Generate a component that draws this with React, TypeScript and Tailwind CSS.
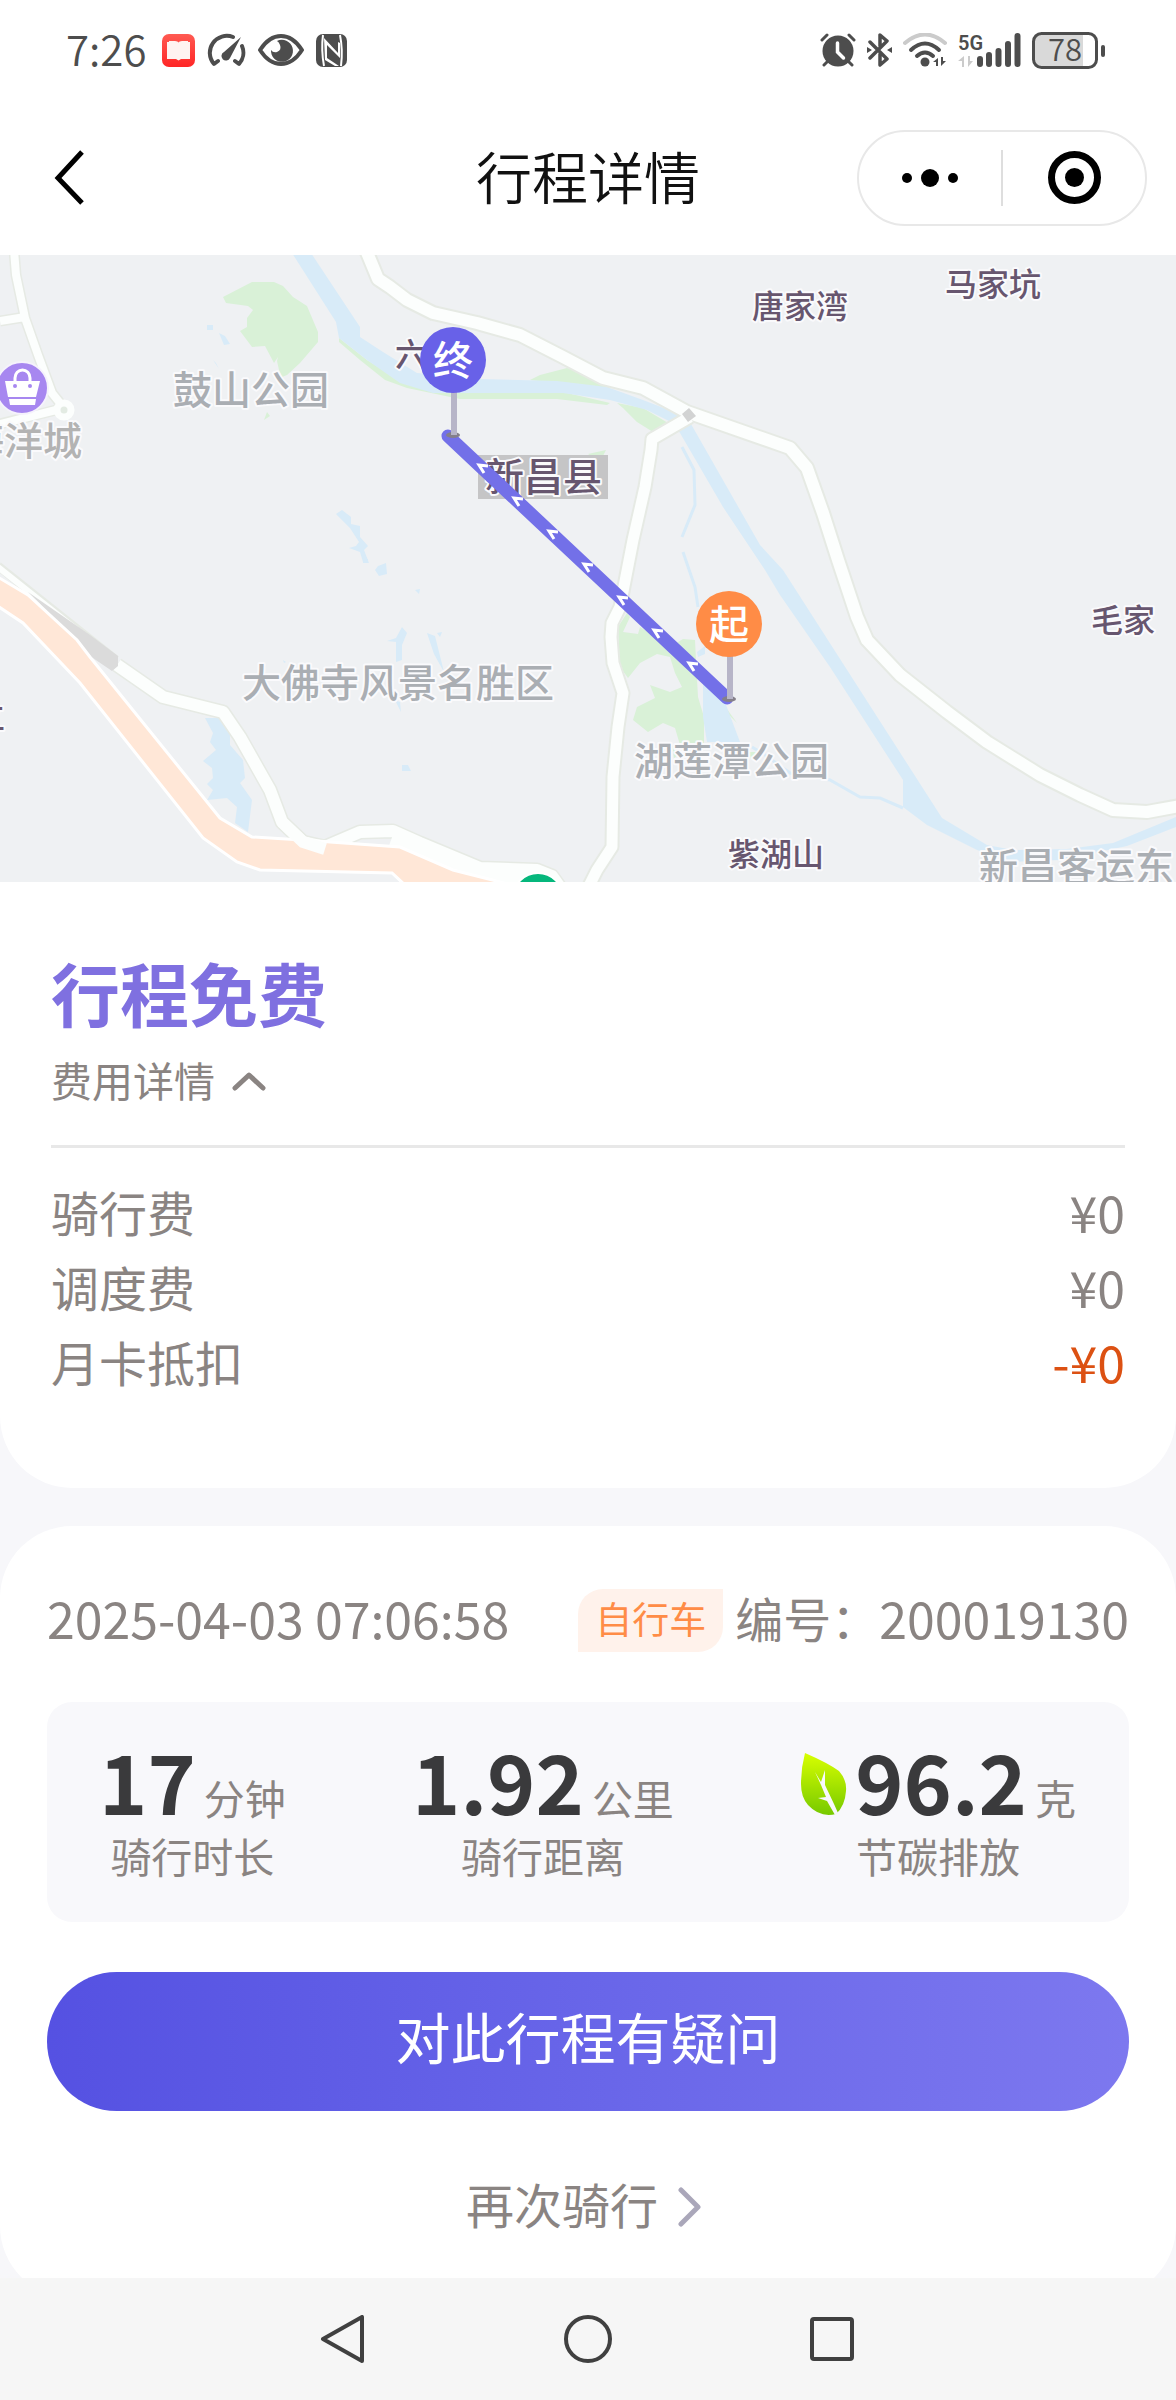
import * as React from "react"

const fees = [
  { label: "骑行费", value: "¥0" },
  { label: "调度费", value: "¥0" },
  { label: "月卡抵扣", value: "-¥0", discount: true },
]

const stats = [
  { value: "17", unit: "分钟", label: "骑行时长" },
  { value: "1.92", unit: "公里", label: "骑行距离" },
  { value: "96.2", unit: "克", label: "节碳排放", leaf: true },
]

const places = [
  { name: "海洋城", x: -35, y: 455, size: 39, color: "#b3b3b3" },
  { name: "鼓山公园", x: 173, y: 404, size: 39, color: "#aaaeb3" },
  { name: "大佛寺风景名胜区", x: 242, y: 697, size: 39, color: "#aaaeb3" },
  { name: "湖莲潭公园", x: 634, y: 775, size: 39, color: "#aaaeb3" },
  { name: "新昌客运东", x: 979, y: 881, size: 39, color: "#aaaeb3" },
  { name: "唐家湾", x: 752, y: 318, size: 32, color: "#67566f" },
  { name: "马家坑", x: 945, y: 296, size: 32, color: "#67566f" },
  { name: "毛家", x: 1091, y: 632, size: 32, color: "#67566f" },
  { name: "紫湖山", x: 728, y: 866, size: 32, color: "#67566f" },
  { name: "六", x: 395, y: 366, size: 32, color: "#67566f" },
  { name: "立", x: -27, y: 728, size: 32, color: "#67566f" },
  { name: "新昌县", x: 485, y: 491, size: 39, color: "#67566f" },
]

const arrows = [
  [479, 465],
  [514, 498],
  [549, 531],
  [584, 564],
  [619, 597],
  [654, 630],
  [689, 663],
]

const northRoad =
  "M366 250L378 279L390 287L407 300L433 313L477 323L520 335L563 357L603 378L643 388L687 412L790 448L807 468L823 513L838 560L857 617L867 640L900 675L947 712L987 742L1040 775L1080 795L1113 810L1147 812L1180 806"
const southRoad =
  "M690 417L652 439L651 450L645 487L633 540L620 607L612 623L611 637L613 663L623 693L618 727L613 777L612 847L597 870L589 886"
const westRoad =
  "M117 665L163 697L223 712L240 737L270 790L282 822L303 842L325 847L360 832L393 831L420 843L480 868L537 870L552 876L562 890"
const sideRoad = "M14 250L16 275L25 318L38 355L52 393L60 403M0 321L25 317M0 424L56 410"

function StatusIconsLeft() {
  return (
    <div className="flex items-center gap-3 text-[#4d4d4d]">
      <svg className="h-[33px] w-[33px]" viewBox="0 0 33 33">
        <defs>
          <linearGradient id="book" x1="0" y1="0" x2="0" y2="1">
            <stop offset="0" stopColor="#ff5a52" />
            <stop offset="1" stopColor="#ff2626" />
          </linearGradient>
        </defs>
        <rect width="33" height="33" rx="7" fill="url(#book)" />
        <path d="M5 8h2V7h6q3 0 3.500 1.500Q17 7 20 7h6v1h2v17h-9l-2.500 1.500L14 25H5z" fill="#fff3f1" />
      </svg>
      <svg className="h-[34px] w-[39px]" viewBox="0 0 39 34" fill="none" stroke="currentColor" strokeWidth="4" strokeLinecap="round" strokeLinejoin="round">
        <path d="M26 4A17 17 0 0 0 7 31L11 28M35 13A17 17 0 0 1 32 31L28 28" />
        <path d="M34 4L17 19a4.500 4.500 0 1 0 6 6z" fill="currentColor" stroke="none" />
      </svg>
      <svg className="h-8 w-[46px]" viewBox="0 0 46 32">
        <path d="M2 16Q11 2 23 2T44 16Q35 30 23 30T2 16z" fill="none" stroke="currentColor" strokeWidth="4" strokeLinejoin="round" />
        <path d="M19 7a11 11 0 1 1-6 9q2 3 6 2 5-2 3-7-1-3-3-4z" fill="currentColor" />
      </svg>
      <svg className="h-[33px] w-[31px]" viewBox="0 0 31 33">
        <rect width="31" height="33" rx="7" fill="currentColor" />
        <path d="M7 1Q5 16 8 32M24 1Q27 16 25 32" fill="none" stroke="#fff" strokeWidth="2" />
        <path d="M8 4L22 19V8L24 9V24L11 11V24L23 32H19L9 26z" fill="#fff" />
      </svg>
    </div>
  )
}

function StatusIconsRight() {
  return (
    <div className="flex items-center gap-[11px] text-[#4d4d4d]">
      <svg className="h-[34px] w-9" viewBox="0 0 36 34" fill="none" stroke="currentColor" strokeLinecap="round">
        <circle cx="18" cy="18" r="15.500" fill="currentColor" stroke="none" />
        <path d="M2 7L7 2M34 7L29 2M7 29l-3 3M29 29l3 3" strokeWidth="3" />
        <path d="M17.500 10v9l6 6" stroke="#fff" strokeWidth="3.500" />
      </svg>
      <svg className="h-[34px] w-[25px]" viewBox="0 0 25 34" fill="none" stroke="currentColor" strokeWidth="3.500" strokeLinejoin="round" strokeLinecap="round">
        <path d="M3 9L20 26L13 32V21M3 25L20 8L13 2V13" />
        <path d="M0 14l5 3-5 3zM25 14l-5 3 5 3z" fill="currentColor" stroke="none" />
      </svg>
      <svg className="h-[34px] w-11" viewBox="0 0 44 34" fill="none" strokeLinecap="round" strokeWidth="4">
        <path d="M2 10Q22-7 42 10" stroke="#cbcbcb" />
        <path d="M8 17Q22 4 36 17M14 23Q22 16 30 23" stroke="currentColor" />
        <circle cx="22" cy="29" r="4.500" fill="currentColor" />
        <path d="M30 29l5-4v8h-2v-4zM43 28l-5 5v-9h2v4z" fill="currentColor" />
      </svg>
      <svg className="h-[34px] w-[63px] overflow-visible" viewBox="0 0 63 34">
        <text x="0" y="17" fontSize="20" fontWeight="600" fill="currentColor" className="font-['Roboto',sans-serif]">5G</text>
        <path d="M0 28l6-5v11H4v-6zM15 28l-5 6V23h2v5z" fill="#cbcbcb" />
        <path d="M22 26v5M31 22v9M40.500 18v13M50 11v20M59.500 3v28" stroke="currentColor" strokeWidth="6" strokeLinecap="round" />
      </svg>
      <svg className="h-[37px] w-[73px] overflow-visible" viewBox="0 0 73 37">
        <path d="M10 2H51V35H10Q2 35 2 27V10Q2 2 10 2z" fill="#d9d9d9" />
        <rect x="1.500" y="1.500" width="63" height="34" rx="8" fill="none" stroke="currentColor" strokeWidth="3" />
        <path d="M71 15v8" stroke="currentColor" strokeWidth="4" strokeLinecap="round" />
        <text x="33" y="29" fontSize="31" fontWeight="350" textAnchor="middle" fill="currentColor">78</text>
      </svg>
    </div>
  )
}

function TitleBar() {
  return (
    <header className="grid h-[155px] grid-cols-[1fr_auto_1fr] items-center">
      <button aria-label="返回" className="ml-[54px] w-8">
        <svg className="h-14 w-8" viewBox="0 0 32 56" fill="none" stroke="#000" strokeWidth="5">
          <path d="M28 2L4 28L28 53" />
        </svg>
      </button>
      <h1 className="pb-[6px] text-[56px] leading-[70px] font-[350] text-[#111]">行程详情</h1>
      <div className="mr-[29px] flex h-24 w-[290px] items-center justify-self-end rounded-full border-2 border-[#e8e8e8]">
        <button aria-label="更多" className="flex flex-1 items-center justify-center gap-[9px]">
          <span className="h-[10px] w-[10px] rounded-full bg-black" />
          <span className="h-[18px] w-[18px] rounded-full bg-black" />
          <span className="h-[10px] w-[10px] rounded-full bg-black" />
        </button>
        <span className="h-14 w-[2px] bg-[#dedede]" />
        <button aria-label="关闭" className="flex flex-1 justify-center">
          <span className="flex h-[53px] w-[53px] items-center justify-center rounded-full border-[7px] border-black">
            <span className="h-[19px] w-[19px] rounded-full bg-black" />
          </span>
        </button>
      </div>
    </header>
  )
}

function Pin({ x, y, color, text }: { x: number; y: number; color: string; text: string }) {
  return (
    <g>
      <ellipse cx={x} cy={y + 75} rx="7" ry="3" fill="#85808a" />
      <path d={`M${x + 1} ${y + 30}v45`} stroke="#b7b5c8" strokeWidth="6" />
      <circle cx={x} cy={y} r="33" fill={color} />
      <text x={x} y={y + 15} fontSize="40" fontWeight="500" textAnchor="middle" fill="#fff">{text}</text>
    </g>
  )
}

function TripMap() {
  return (
    <svg className="block w-full bg-[#eff1f3]" viewBox="0 255 1176 627" role="img" aria-label="行程地图">
      {/* parks */}
      <g fill="#d9f1d7">
        <path d="M223 297L252 282L274 282L283 286L293 297L307 306L318 332V342L300 363L287 375L282 377L279 370L277 361L278 357L274 363L265 346L252 347L240 331L247 327V318L253 310L248 306L226 303z" />
        <path d="M267 412l3 4-6 4z" />
        <path d="M339 338L367 360L400 380L433 392H563L610 403L607 405L557 399H460L407 388L385 380L360 360L339 342z" />
        <path d="M530 380L540 375L567 368L590 373L612 390z" />
        <path d="M617 403L643 408L668 423L653 432L637 422L623 408z" />
        <path d="M588 454L606 450L600 462z" />
        <path d="M618 627L627 613L630 617L623 632L638 634L640 627L653 635L670 647L683 639L695 640L696 660L698 697L704 717V743L680 745L675 728L663 723L648 732L633 720L637 707L655 698L650 685L670 692L682 687L675 673L670 657L657 654L640 663L628 678L620 667z" />
        <path d="M724 705l13 18-8-8zM749 752h10l-8 7zM672 745l6 10-4 3z" />
      </g>
      {/* water */}
      <g fill="#d8ebf8">
        <path d="M292 253H311L360 327V337L383 352L417 373L480 379L557 381L607 387L643 400L687 417L760 545L783 570L942 818L987 845L1013 850L1067 849L1113 843L1176 817V827L1127 846L1060 860L1013 862L977 850L927 825L903 807V780L830 667L780 595L765 570L723 507L680 433L673 423L647 410L610 400L563 393H433L400 383L367 360L339 338L336 322z" />
        <path d="M703 675L710 683L723 697L740 742H707L703 717z" />
        <path d="M697 652l8-6v8l-7 3z" />
        <path d="M205 718L222 718L230 732V745L243 760L245 778L240 783L252 800L248 832L235 823L237 807L227 798L207 800L213 790L207 784L213 778L212 768L203 761L216 750L210 742L213 733z" />
        <path d="M336 514L342 510L351 517V524L360 526V537L368 546L364 550L369 563L363 562L360 552L349 548L356 546L359 542L350 528z" />
        <path d="M378 566l8-3 1 11-8 2-4-6zM363 559h5v4h-5z" />
        <path d="M207 325h6v5h-6zM219 333l6 3 5 8-6 1zM213 360l3 3 3 6zM283 660l3 2-2 1z" />
        <path d="M387 641L396 638L402 627L407 633L402 645V660L396 662V642zM395 700l5 2 1 10zM415 590l5-1-1 5zM427 633l8 3 9 36-10-18zM437 633l5-1-2 5zM402 765l6 0 3 6h-9z" />
      </g>
      <g fill="none" stroke="#d8ebf8" strokeWidth="3">
        <path d="M682 447L694 470L695 505L682 537M683 552L695 587L698 607" />
        <path d="M752 747L765 755L790 773L830 780L860 797L880 798L903 808" />
      </g>

      {/* roads */}
      <g fill="none" strokeLinejoin="round">
        <path d="M-2 566L116 660" stroke="#e6eae4" strokeWidth="9" />
        <path d="M-2 567L116 661" stroke="#fcfefd" strokeWidth="6" />
        <g stroke="#e6eae4">
          <path d={sideRoad} strokeWidth="11" />
          <path d={northRoad} strokeWidth="16" />
          <path d={southRoad} strokeWidth="15" />
          <path d={westRoad} strokeWidth="15" />
        </g>
        <g stroke="#fcfefd">
          <path d={sideRoad} strokeWidth="8" />
          <circle cx="64" cy="410" r="7" strokeWidth="7" fill="#e3ebe3" />
          <path d={northRoad} strokeWidth="12" />
          <path d={southRoad} strokeWidth="11" />
          <path d={westRoad} strokeWidth="12" />
          <path d="M390 843L433 858L520 880L560 888" strokeWidth="14" />
        </g>
      </g>
      <path d="M28 592L90 635L118 656V666L112 671L90 656L77 640z" fill="#dbdbdb" />
      <path d="M689 408l7 8-8 6-6-8z" fill="#d2d3d3" />
      <path
        d="M-4 576L28 595L77 640L90 657L220 818L252 837L318 841L330 842L400 847L453 870L512 885H405L392 873L260 870L237 862L203 838L80 683L23 623L-4 605z"
        fill="#ffe7d7"
        stroke="#fff"
        strokeWidth="3"
      />
      <path d="M282 822L303 842L325 849" fill="none" stroke="#fcfefd" strokeWidth="12" />

      {/* points of interest */}
      <circle cx="22" cy="388" r="26" fill="#a787f0" stroke="#f5f2fc" strokeWidth="2" />
      <path d="M5 381H40L36 397H8zM9 399H36L35 405H10z" fill="#fff" />
      <path d="M15 382v-4a7.500 8 0 0 1 15 0v4" fill="none" stroke="#fff" strokeWidth="3" />
      <circle cx="15" cy="386" r="2" fill="#a787f0" />
      <circle cx="30" cy="386" r="2" fill="#a787f0" />
      <circle cx="538" cy="898" r="25" fill="#05b77c" stroke="#fff" strokeWidth="2" />

      <rect x="478" y="455" width="130" height="44" fill="#c5c5c6" />
      {places.map((place) => (
        <text
          key={place.name}
          x={place.x}
          y={place.y}
          fontSize={place.size}
          fontWeight="500"
          fill={place.color}
          stroke="#fafafc"
          strokeWidth="4"
          strokeLinejoin="round"
          paintOrder="stroke"
        >
          {place.name}
        </text>
      ))}

      {/* route */}
      <path d="M448 436L727 698" stroke="#7370e8" strokeWidth="13" strokeLinecap="round" />
      {arrows.map(([x, y]) => (
        <path key={x} d={`M${x + 9} ${y + 1}L${x} ${y}L${x + 5} ${y + 8}`} fill="none" stroke="#fff" strokeWidth="3" />
      ))}
      <Pin x={453} y={360} color="#6861e8" text="终" />
      <Pin x={729} y={624} color="#ff8c46" text="起" />
    </svg>
  )
}

function FeeCard() {
  const [open, setOpen] = React.useState(true)

  return (
    <section className="rounded-b-[72px] bg-white px-[51px] pt-[65px] pb-[89px]">
      <h2 className="text-[69px] leading-[90px] font-bold text-[#7f70e0]">行程免费</h2>
      <button
        className="mt-3 flex items-center gap-4 text-[41px] leading-[60px] text-[#8a8482]"
        onClick={() => setOpen(!open)}
      >
        费用详情
        <svg className="mt-1 h-5 w-9" viewBox="0 0 36 20" fill="none" stroke="currentColor" strokeWidth="5" strokeLinecap="round" strokeLinejoin="round">
          <path d={open ? "M4 17L18 4L32 17" : "M4 4L18 17L32 4"} />
        </svg>
      </button>
      <hr className="mt-9 border-t-[3px] border-[#e8e8e8]" />
      {open && (
        <dl className="mt-[26px] text-[48px] leading-[75px] text-[#8a8482]">
          {fees.map((fee) => (
            <div key={fee.label} className="flex justify-between">
              <dt>{fee.label}</dt>
              <dd className={fee.discount ? "text-[50px] text-[#dc5113]" : "text-[50px]"}>{fee.value}</dd>
            </div>
          ))}
        </dl>
      )}
    </section>
  )
}

function Leaf() {
  return (
    <svg className="h-[62px] w-[47px]" viewBox="0 0 47 62">
      <defs>
        <linearGradient id="leaf" x1="0" y1="0" x2="0" y2="1">
          <stop offset="0" stopColor="#d8ff00" />
          <stop offset="1" stopColor="#77c900" />
        </linearGradient>
      </defs>
      <path d="M5 0Q28 10 39 18Q47 27 46 38Q45 53 36 61Q20 65 8 52Q1 44 1 31Q1 15 5 0z" fill="url(#leaf)" />
      <path d="M15 19l6 10 4-12 0 15 9 19 4 9-3 2-8-14-9-3 8-1-5-12z" fill="#f8f8fb" />
    </svg>
  )
}

function TripCard() {
  return (
    <section className="mt-[38px] rounded-[72px] bg-white px-[47px] pt-[63px] pb-[65px]">
      <div className="flex h-[63px] items-center justify-between text-[50px] leading-[63px] text-[#8a8482]">
        <time className="pb-[6px]">2025-04-03 07:06:58</time>
        <div className="flex items-center">
          <span className="mr-3 rounded-tl-[25px] rounded-br-[25px] bg-[#fff2eb] px-[17px] pb-1 text-[37px] leading-[59px] text-[#ff8c46]">
            自行车
          </span>
          <span className="pb-[6px] text-[48px]">编号：</span>
          <span className="pb-[6px]">200019130</span>
        </div>
      </div>

      <div className="mt-[50px] flex justify-between rounded-[25px] bg-[#f8f8fb] pt-[37px] pr-[53px] pb-[41px] pl-[52px]">
        {stats.map((stat) => (
          <div key={stat.label} className="flex flex-col items-center">
            <div className="flex items-baseline gap-2">
              {stat.leaf && <Leaf />}
              <span className="text-[82px] leading-[82px] font-bold text-[#3a3a3c]">{stat.value}</span>
              <span className="text-[41px] leading-none text-[#8a8482]">{stat.unit}</span>
            </div>
            <div className="mt-2 text-[41px] leading-[52px] text-[#8a8482]">{stat.label}</div>
          </div>
        ))}
      </div>

      <button className="mt-[50px] h-[139px] w-full rounded-full bg-linear-to-r from-[#5551e2] to-[#7d78ef] pb-3 text-[55px] text-white">
        对此行程有疑问
      </button>
      <a href="#" className="mt-[62px] flex items-center justify-center gap-5 pr-2 text-[48px] leading-[60px] text-[#8a8482]">
        再次骑行
        <svg className="mt-2 h-10 w-6" viewBox="0 0 24 40" fill="none" stroke="#aaa7ba" strokeWidth="5" strokeLinecap="round" strokeLinejoin="round">
          <path d="M3 3L20 20L3 37" />
        </svg>
      </a>
    </section>
  )
}

function SystemNav() {
  return (
    <nav className="flex h-[122px] shrink-0 items-center justify-center gap-[196px] bg-[#f6f6f6]">
      <button aria-label="后退">
        <svg className="h-12 w-12" viewBox="0 0 48 48" fill="none" stroke="#404040" strokeWidth="4" strokeLinejoin="round">
          <path d="M42 2V46L3 24z" />
        </svg>
      </button>
      <button aria-label="主页">
        <svg className="h-12 w-12" viewBox="0 0 48 48" fill="none" stroke="#404040" strokeWidth="4">
          <circle cx="24" cy="24" r="22" />
        </svg>
      </button>
      <button aria-label="最近任务">
        <svg className="h-12 w-12" viewBox="0 0 48 48" fill="none" stroke="#404040" strokeWidth="4">
          <rect x="4" y="4" width="40" height="40" rx="2" />
        </svg>
      </button>
    </nav>
  )
}

export default function App() {
  return (
    <div className="flex h-screen flex-col bg-white font-['Noto_Sans_CJK_SC',sans-serif]">
      <div className="flex h-[100px] shrink-0 items-center justify-between pr-[71px] pl-[66px]">
        <div className="flex items-center gap-4">
          <span className="pb-1 text-[42px] leading-[42px] font-[350] text-[#4d4d4d]">7:26</span>
          <StatusIconsLeft />
        </div>
        <StatusIconsRight />
      </div>
      <TitleBar />
      <main className="min-h-0 flex-1 overflow-y-auto bg-[#f7f7fa] [scrollbar-width:none]">
        <TripMap />
        <FeeCard />
        <TripCard />
      </main>
      <SystemNav />
    </div>
  )
}
